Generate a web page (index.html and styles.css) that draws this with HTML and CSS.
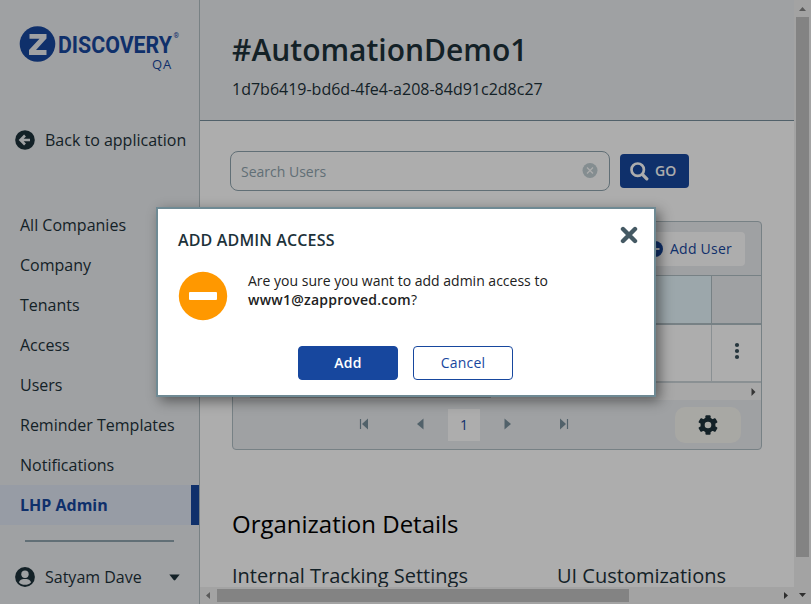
FILE: index.html
```html
<!DOCTYPE html>
<html lang="en">
<head>
<meta charset="utf-8">
<title>ZDiscovery Admin</title>
<link rel="stylesheet" href="styles.css">
</head>
<body>
<div class="app">
  <aside class="sidebar">
    <div class="brand">
      <svg class="brand-mark" viewBox="0 0 36 36"><circle cx="18" cy="18" r="17.8" fill="#17479e"/><path d="M10 8h17v4.5L16.500 24H27v5H9.500v-5L20 12.800H10z" fill="#ebedf0"/></svg>
      <svg class="brand-word" viewBox="0 0 122 30"><text x="0" y="24" textLength="114" lengthAdjust="spacingAndGlyphs">DISCOVERY</text><text class="reg" x="115.500" y="8.500">®</text></svg>
    </div>
    <div class="env">QA</div>
    <div class="back">
      <svg width="20" height="20" viewBox="0 0 20 20"><circle cx="10" cy="10" r="9.800" fill="#1d323a"/><path d="M15 10H6M10 5.500 5.500 10l4.500 4.500" fill="none" stroke="#ebedf0" stroke-width="2.600"/></svg>
      <span>Back to application</span>
    </div>
    <nav>
      <a>All Companies</a><a>Company</a><a>Tenants</a><a>Access</a><a>Users</a><a>Reminder Templates</a><a>Notifications</a><a class="active">LHP Admin</a>
    </nav>
    <div class="rule"></div>
    <div class="profile">
      <svg width="20" height="20" viewBox="0 0 20 20"><circle cx="10" cy="10" r="9.900" fill="#1d323a"/><circle cx="10" cy="7.300" r="3.700" fill="#ebedf0"/><path d="M3.900 15.200c1-2.400 3-3.200 4.500-3.200h3.200c1.500 0 3.500.8 4.500 3.200-3 3.500-9.200 3.500-12.200 0z" fill="#ebedf0"/></svg>
      <span>Satyam Dave</span>
      <svg class="caret" width="11" height="7" viewBox="0 0 11 7"><path d="M.3.500h10.400L6.300 6q-.8.800-1.600 0z" fill="#1d323a"/></svg>
    </div>
  </aside>
  <div class="pane">
    <main class="content">
      <header><h1>#AutomationDemo1</h1><p>1d7b6419-bd6d-4fe4-a208-84d91c2d8c27</p></header>
      <div class="search">
        <div class="field"><span>Search Users</span>
          <svg width="16" height="16" viewBox="0 0 16 16"><circle cx="8" cy="7.500" r="7.500" fill="#c3d0d5"/><path d="m5 4.500 6 6m0-6-6 6" stroke="#fff" stroke-width="1.200"/></svg></div>
        <div class="go"><svg width="19" height="19" viewBox="0 0 19 19" fill="none" stroke="#fff" stroke-linecap="round"><circle cx="7.700" cy="7.700" r="6.200" stroke-width="2.700"/><path d="m12.600 12.600 4.200 4.200" stroke-width="3.300"/></svg><span>GO</span></div>
      </div>
      <section class="grid">
        <div class="toolbar"><div class="add-user"><svg width="16" height="16" viewBox="0 0 16 16"><circle cx="8" cy="8" r="8" fill="#17479e"/><path d="M8 3.500v9M3.500 8h9" stroke="#fff" stroke-width="2.200"/></svg><span>Add User</span></div></div>
        <div class="row head"><div></div><div></div></div>
        <div class="row"><div></div><div><svg width="6" height="18" viewBox="0 0 6 18" fill="#38505b"><circle cx="3" cy="3" r="2.100"/><circle cx="3" cy="9" r="2.100"/><circle cx="3" cy="15" r="2.100"/></svg></div></div>
        <div class="hscroll"><i></i><svg width="5" height="8" viewBox="0 0 5 8"><path d="M.5 0v8L4.500 4z" fill="#505050"/></svg></div>
        <div class="pager">
          <div class="pages">
            <svg viewBox="0 0 10 12"><path d="M1.500 1v10" stroke="#78909c" stroke-width="1.200"/><path d="M9 .5v11L3 6z"/></svg>
            <svg viewBox="0 0 10 12"><path d="M8.500.5v11L2 6z"/></svg>
            <b>1</b>
            <svg viewBox="0 0 10 12"><path d="M1.500.5v11L8 6z"/></svg>
            <svg viewBox="0 0 10 12"><path d="M1 .5v11L7 6z"/><path d="M8.500 1v10" stroke="#78909c" stroke-width="1.200"/></svg>
          </div>
          <div class="settings"><svg width="20" height="20" viewBox="0 0 20 20"><g fill="#1d323a"><circle cx="10" cy="10" r="7.500"/><rect x="7.400" y=".2" width="5.200" height="19.600" rx="1"/><rect x="7.400" y=".2" width="5.200" height="19.600" rx="1" transform="rotate(60 10 10)"/><rect x="7.400" y=".2" width="5.200" height="19.600" rx="1" transform="rotate(120 10 10)"/></g><circle cx="10" cy="10" r="3.300" fill="#f8f8f2"/></svg></div>
        </div>
      </section>
      <h2>Organization Details</h2>
      <div class="subheads"><h3>Internal Tracking Settings</h3><h3>UI Customizations</h3></div>
    </main>
    <div class="vbar"><svg width="7" height="4" viewBox="0 0 7 4"><path d="M0 4h7L3.500 0z" fill="#858585"/></svg><i></i><svg width="7" height="4" viewBox="0 0 7 4"><path d="M0 0h7L3.500 4z" fill="#444"/></svg></div>
    <div class="hbar"><svg width="4" height="7" viewBox="0 0 4 7"><path d="M4 0v7L0 3.500z" fill="#858585"/></svg><i></i><svg width="4" height="7" viewBox="0 0 4 7"><path d="M0 0v7l4-3.500z" fill="#444"/></svg></div>
  </div>
</div>
<div class="overlay">
  <div class="modal">
    <div class="title"><h4>ADD ADMIN ACCESS</h4><svg width="18" height="18" viewBox="0 0 18 18"><path d="m3 3 12 12M15 3 3 15" stroke="#455a64" stroke-width="4.400" stroke-linecap="round"/></svg></div>
    <div class="message">
      <svg width="50" height="50" viewBox="0 0 50 50"><circle cx="25" cy="25" r="24.200" fill="#ff9800"/><rect x="11" y="21" width="28" height="8" rx="1" fill="#fff"/></svg>
      <p>Are you sure you want to add admin access to<br><strong>www1@zapproved.com</strong>?</p>
    </div>
    <div class="actions"><button class="primary">Add</button><button>Cancel</button></div>
  </div>
</div>
</body>
</html>
```
FILE: styles.css
```css
* { box-sizing: border-box; }
body { margin: 0; font-family: "Open Sans", sans-serif; font-size: 16px; font-weight: 400; color: #1d323a; overflow: hidden; }
svg { display: block; flex: none; }
h1, h2, h3, h4, p { margin: 0; font-weight: 400; }
.app { display: grid; grid-template-columns: 200px 1fr; height: 604px; }
.sidebar { background: #ebedf0; border-right: 1px solid #b2bec3; }
.brand { display: flex; padding: 26px 0 0 19px; height: 58px; }
.brand-mark { width: 37px; height: 36px; }
.brand-word { width: 122px; height: 30px; margin-left: 2px; margin-top: 3px; overflow: visible; fill: #17479e; font: 700 24px Roboto, sans-serif; }
.brand-word .reg { font-size: 7px; font-weight: 400; }
.env { margin: -1px 0 0 152px; font-size: 13px; line-height: 14px; font-weight: 400; color: #17479e; letter-spacing: 1px; }
.back { display: flex; align-items: center; gap: 10px; padding-left: 15px; height: 30px; margin-top: 54px; }
nav { margin-top: 50px; }
nav a { display: block; height: 40px; line-height: 40px; padding-left: 20px; }
nav .active { background: #dfe6f4; color: #17479e; font-weight: 700; border-right: 8px solid #17479e; }
.rule { height: 2px; margin: 15px 25px 0; background: #90a4ae; }
.profile { display: flex; align-items: center; gap: 10px; padding: 0 19px 0 15px; height: 30px; margin-top: 20px; }
.caret { margin-left: auto; }
.pane { display: grid; grid-template-columns: 594px 17px; grid-template-rows: 587px 17px; }
.content { overflow: hidden; }
header { height: 121px; padding: 30px 0 0 32px; background: #ebedf0; border-bottom: 1px solid #78909c; }
h1 { font-size: 30px; line-height: 40px; font-weight: 600; }
header p { line-height: 24px; margin-top: 7px; }
.search { display: flex; align-items: center; gap: 10px; margin: 30px 0 0 30px; height: 40px; }
.field { width: 380px; height: 40px; border: 1px solid #90a4ae; border-radius: 8px; display: flex; align-items: center; justify-content: space-between; padding: 0 11px 0 10px; font-size: 14px; font-weight: 400; color: #90a4ae; }
.go { width: 69px; height: 34px; background: #17479e; color: #fff; border-radius: 4px; display: flex; align-items: center; gap: 6px; padding-left: 10px; font-weight: 600; font-size: 14px; }
.go span { margin-top: -1px; }
.grid { width: 530px; height: 229px; margin: 30px 0 0 32px; border: 1px solid #b0bec5; border-radius: 4px; background: #ebedf0; overflow: hidden; }
.toolbar { height: 54px; padding-top: 10px; border-bottom: 1px solid #b0bec5; }
.add-user { width: 110px; height: 34px; margin-left: auto; margin-right: 16px; background: #fff; border-radius: 4px; display: flex; align-items: center; gap: 7px; padding-left: 12px; color: #17479e; font-size: 14px; font-weight: 400; letter-spacing: .25px; }
.add-user span { margin-top: -2px; }
.row { display: grid; grid-template-columns: 479px 1fr; height: 58px; background: #fff; border-bottom: 2px solid #ccd5d9; }
.row > div { display: flex; align-items: center; justify-content: center; padding-bottom: 4px; }
.row > div:first-child { border-right: 1px solid #ccd5d9; }
.head { height: 49px; background: #ebedf0; border-bottom-color: #b0bec5; }
.head > div:first-child { background: #e6f6fc; border-color: #b0bec5; }
.hscroll { height: 17px; background: #f8f8f8; display: flex; justify-content: space-between; align-items: center; padding: 0 5px 0 17px; }
.hscroll i { width: 241px; height: 13px; background: #c1c1c1; }
.pager { display: flex; height: 49px; padding: 7px 20px 0 126px; justify-content: space-between; }
.pages { display: flex; gap: 46px; align-items: center; height: 32px; margin-top: 2px; }
.pages svg { width: 10px; height: 12px; margin-top: -2px; fill: #78909c; }
.pages b { width: 32px; height: 32px; margin: 0 -23px; background: #fff; text-align: center; line-height: 32px; font-size: 14px; font-weight: 400; color: #17479e; }
.settings { width: 66px; height: 36px; background: #f8f8f2; border-radius: 10px; display: grid; place-items: center; }
h2 { margin: 56px 0 0 32px; font-size: 24px; line-height: 36px; color: #000; }
.subheads { display: grid; grid-template-columns: 325px 1fr; padding-left: 32px; margin-top: 20px; }
h3 { font-size: 20px; line-height: 28px; }
.vbar, .hbar { background: #f1f1f1; display: flex; align-items: center; }
.vbar { flex-direction: column; padding: 7px 0; gap: 6px; grid-row: 1 / 3; grid-column: 2; justify-content: space-between; }
.vbar i { width: 13px; height: 540px; background: #c1c1c1; margin-bottom: auto; }
.hbar { padding: 0 6px; gap: 7px; }
.hbar i { width: 412px; height: 13px; background: #c1c1c1; margin-right: auto; }
.overlay { position: absolute; inset: 0; background: rgba(0, 0, 0, .32); }
.modal { width: 500px; height: 190px; margin: 207px 0 0 156px; background: #fff; border: 2px solid #6f8a94; box-shadow: 4px 4px 12px rgba(0, 0, 0, .45); padding: 15px 16px 0 20px; }
.title { display: flex; justify-content: space-between; align-items: flex-start; height: 47px; }
.title svg { margin-top: 2px; }
h4 { font-size: 16px; line-height: 32px; font-weight: 600; letter-spacing: .15px; }
.message { display: flex; height: 75px; }
.message p { margin: 0 0 0 20px; font-size: 14px; line-height: 19px; color: #212121; }
strong { font-weight: 600; letter-spacing: .24px; }
.actions { display: flex; gap: 15px; padding-left: 120px; }
button { width: 100px; height: 34px; padding: 0 0 2px; border: 1px solid #17479e; border-radius: 4px; background: #fff; color: #17479e; font: 400 14px "Open Sans", sans-serif; letter-spacing: .2px; }
.primary { background: #17479e; color: #fff; font-weight: 600; }
```
